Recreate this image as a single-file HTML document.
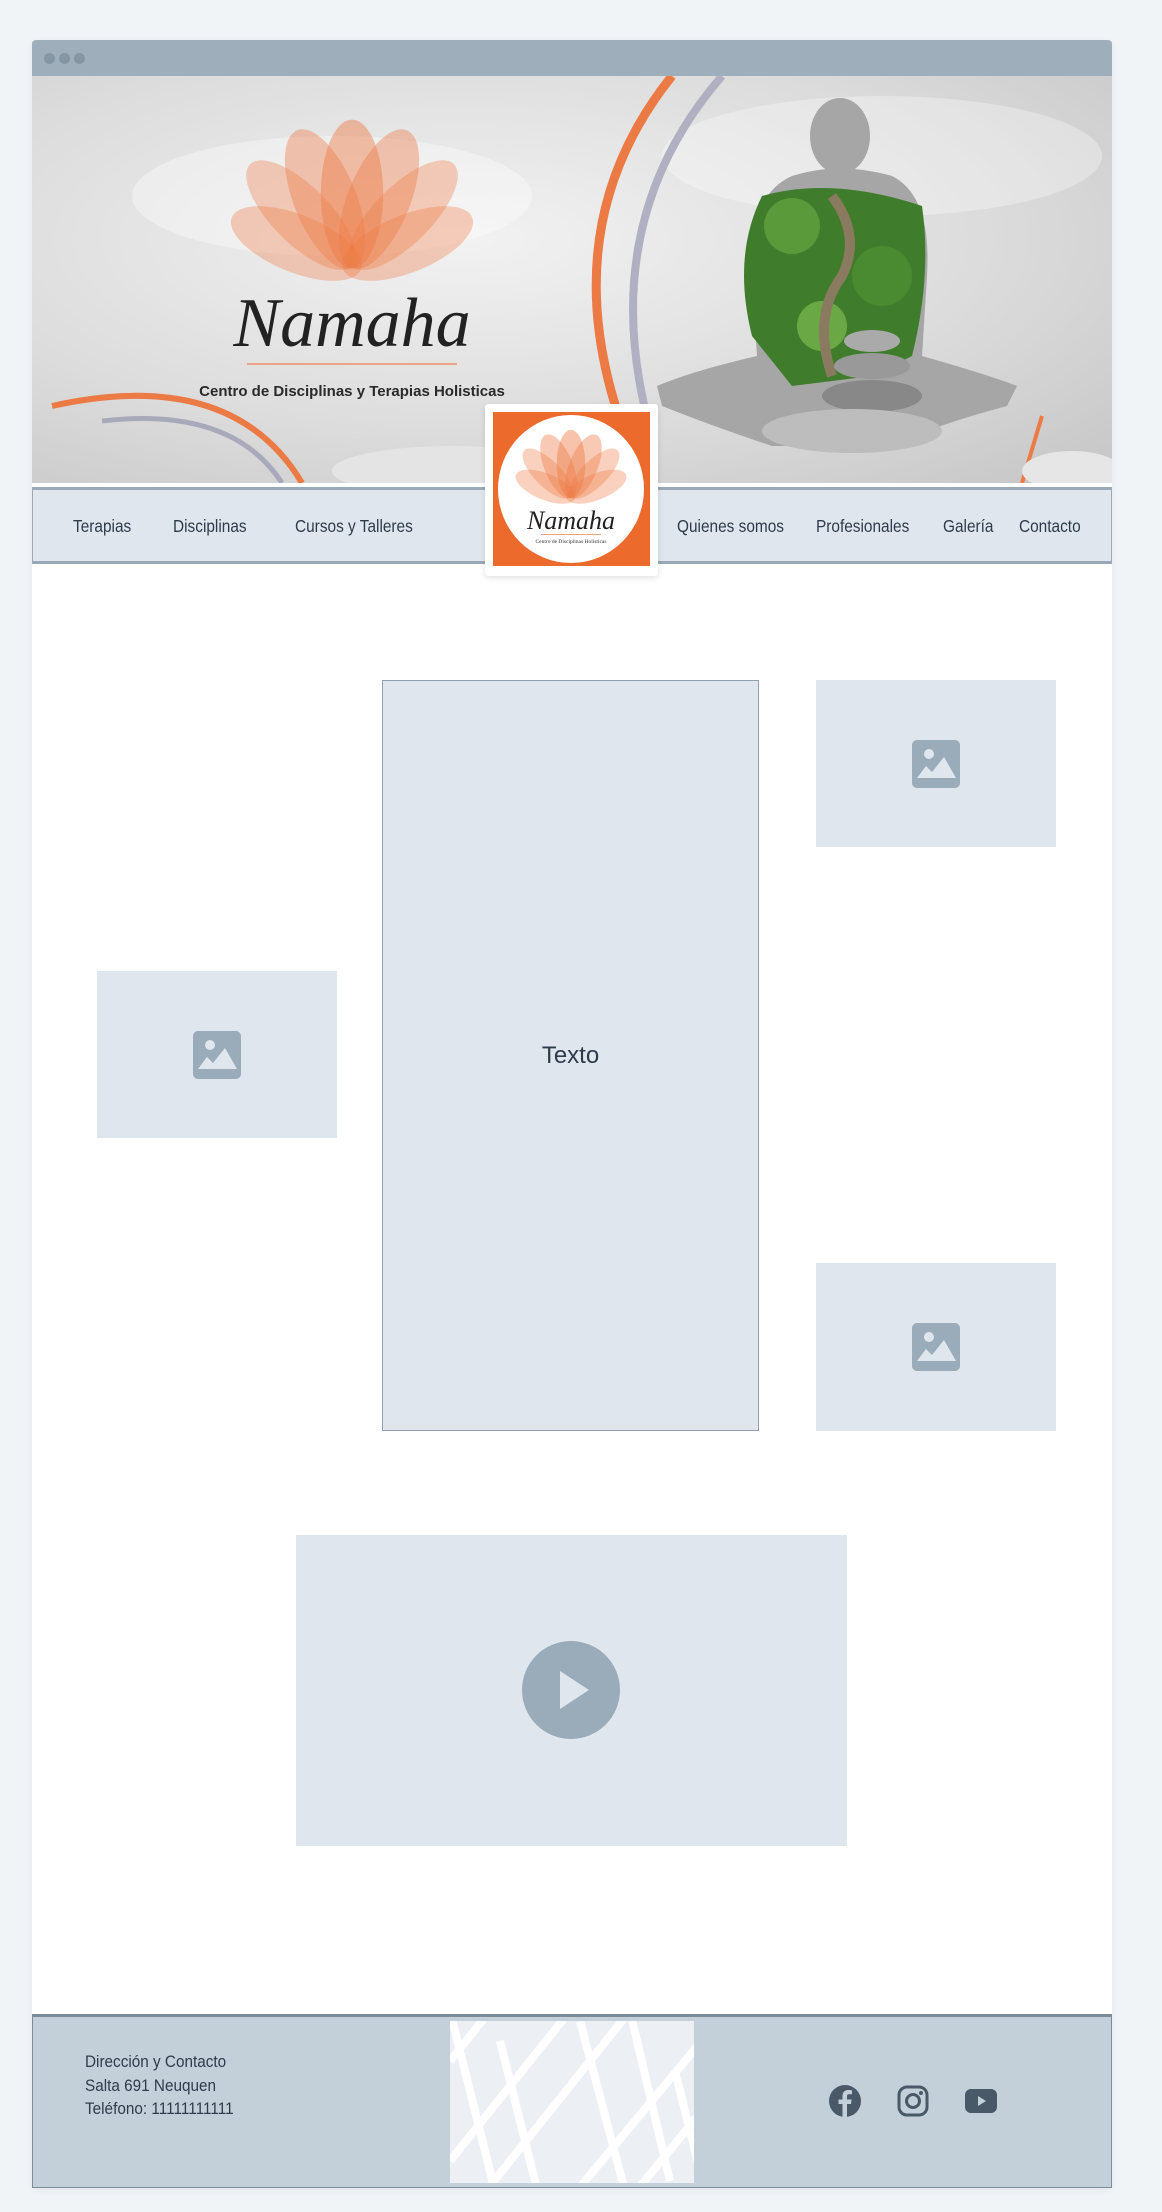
<!DOCTYPE html>
<html><head><meta charset="utf-8"><style>
*{margin:0;padding:0;box-sizing:border-box}
body{width:1162px;height:2212px;background:#f0f4f7;font-family:"Liberation Sans",sans-serif;position:relative;overflow:hidden}
.frame{position:absolute;left:32px;top:40px;width:1080px;height:2148px;background:#fff;border-radius:4px;box-shadow:0 2px 8px rgba(0,0,0,.06)}
.bar{position:absolute;left:32px;top:40px;width:1080px;height:36px;background:#9eaeba;border-radius:4px 4px 0 0}
.dot{position:absolute;top:13px;width:11px;height:11px;border-radius:50%;background:#8597a5}
.abs{position:absolute}
.img{position:absolute;background:#dfe6ee}
.img svg.pc{position:absolute;left:50%;top:50%;margin:-24px 0 0 -24px}
.nav{position:absolute;left:32px;top:487px;width:1080px;height:77px;background:#dfe6ee;border-top:3px solid #9aa9b6;border-bottom:3px solid #9aa9b6;border-left:1px solid #9aa9b6;border-right:1px solid #9aa9b6}
.nav span{position:absolute;top:26px;font-size:17.5px;color:#2f3b4a;transform:scaleX(.88);transform-origin:left}
.ft{position:absolute;left:32px;top:2014px;width:1080px;height:174px;background:#c3d0da;border:1px solid #7d8c99;border-top:3px solid #7d8c99}
.ft p{font-size:17px;color:#2f3b4a;line-height:23.5px;transform:scaleX(.9);transform-origin:left}
</style></head><body>
<div class="frame"></div>
<div class="bar"><div class="dot" style="left:12px"></div><div class="dot" style="left:27px"></div><div class="dot" style="left:42px"></div></div>

<svg class="abs" style="left:32px;top:76px" width="1080" height="407" viewBox="0 0 1080 407">
<defs>
<radialGradient id="sky" cx="0.4" cy="0.4" r="0.8"><stop offset="0" stop-color="#f2f2f2"/><stop offset="0.6" stop-color="#dcdcdc"/><stop offset="1" stop-color="#c8c8c8"/></radialGradient>
<g id="lotus" fill="#ee7a45">
<ellipse cx="0" cy="-60" rx="26" ry="62" opacity=".45"/>
<ellipse cx="0" cy="-60" rx="26" ry="62" opacity=".4" transform="rotate(-22)"/>
<ellipse cx="0" cy="-60" rx="26" ry="62" opacity=".4" transform="rotate(22)"/>
<ellipse cx="0" cy="-60" rx="24" ry="60" opacity=".35" transform="rotate(-45)"/>
<ellipse cx="0" cy="-60" rx="24" ry="60" opacity=".35" transform="rotate(45)"/>
<ellipse cx="0" cy="-50" rx="24" ry="58" opacity=".35" transform="rotate(-68)"/>
<ellipse cx="0" cy="-50" rx="24" ry="58" opacity=".35" transform="rotate(68)"/>
</g>
</defs>
<rect width="1080" height="407" fill="url(#sky)"/>
<ellipse cx="300" cy="120" rx="200" ry="60" fill="#fff" opacity=".35"/>
<ellipse cx="850" cy="80" rx="220" ry="60" fill="#fff" opacity=".3"/>
<use href="#lotus" transform="translate(320,190) scale(1.2)"/>
<text x="320" y="270" text-anchor="middle" font-family="Liberation Serif,serif" font-style="italic" font-size="70" fill="#222">Namaha</text>
<rect x="215" y="287" width="210" height="2" fill="#eea382"/>
<text x="320" y="320" text-anchor="middle" font-size="15" font-weight="bold" fill="#2a2a2a">Centro de Disciplinas y Terapias Holisticas</text>
<path d="M20 330 Q200 290 270 407" stroke="#ec7a44" stroke-width="6" fill="none"/>
<path d="M70 345 Q200 330 250 407" stroke="#a9a9bc" stroke-width="5" fill="none"/>
<path d="M640 0 Q520 150 590 350" stroke="#ec7a44" stroke-width="9" fill="none"/>
<path d="M690 0 Q560 150 620 360" stroke="#b0b0c2" stroke-width="8" fill="none"/>
<path d="M1010 340 L990 407" stroke="#ec7a44" stroke-width="4"/>
<g fill="#a6a6a6">
<ellipse cx="808" cy="60" rx="30" ry="38"/>
<path d="M760 100 Q808 85 860 100 Q900 120 895 200 L890 280 Q960 300 985 310 L975 330 Q900 350 860 370 L740 370 Q680 350 630 330 L625 310 Q660 295 725 280 L720 200 Q715 120 760 100Z"/>
</g>
<path d="M730 120 Q800 100 890 130 Q900 200 880 280 L840 300 L760 310 L720 260 Q700 180 730 120Z" fill="#3f7d2c"/>
<circle cx="760" cy="150" r="28" fill="#5a9a3a"/><circle cx="850" cy="200" r="30" fill="#4a8a30"/><circle cx="790" cy="250" r="25" fill="#6aa845"/>
<path d="M800 300 Q780 240 810 200 Q830 160 800 120" stroke="#8a7a60" stroke-width="10" fill="none"/>
<ellipse cx="840" cy="320" rx="50" ry="16" fill="#888"/><ellipse cx="840" cy="290" rx="38" ry="13" fill="#999"/><ellipse cx="840" cy="265" rx="28" ry="11" fill="#aaa"/>
<ellipse cx="820" cy="355" rx="90" ry="22" fill="#bdbdbd"/>
<ellipse cx="420" cy="395" rx="120" ry="25" fill="#e4e4e4"/>
<ellipse cx="1040" cy="395" rx="50" ry="20" fill="#e6e6e6"/>
</svg>

<div class="nav">
<span style="left:40px">Terapias</span>
<span style="left:140px">Disciplinas</span>
<span style="left:262px">Cursos y Talleres</span>
<span style="left:644px">Quienes somos</span>
<span style="left:783px">Profesionales</span>
<span style="left:910px">Galería</span>
<span style="left:986px">Contacto</span>
</div>

<div class="abs" style="left:485px;top:404px;width:173px;height:172px;background:#fff;border-radius:3px;box-shadow:0 2px 6px rgba(0,0,0,.12)"></div>
<svg class="abs" style="left:493px;top:412px" width="157" height="154" viewBox="0 0 157 154">
<rect width="157" height="154" fill="#ec6a2c"/>
<ellipse cx="78" cy="77" rx="73" ry="74" fill="#fff"/>
<use href="#lotus" transform="translate(78,85) scale(.55)"/>
<text x="78" y="117" text-anchor="middle" font-family="Liberation Serif,serif" font-style="italic" font-size="26" fill="#222">Namaha</text>
<rect x="48" y="122" width="60" height="1" fill="#eea382"/>
<text x="78" y="131" text-anchor="middle" font-family="Liberation Serif,serif" font-size="5.5" fill="#333">Centro de Disciplinas Holisticas</text>
</svg>

<svg width="0" height="0" style="position:absolute"><defs><g id="pic"><rect x="0" y="0" width="48" height="48" rx="5" fill="#9aabb9"/><circle cx="17" cy="14" r="5" fill="#dfe6ee"/><path d="M5 38 L14 26 L20 32 L32 17 L44 38Z" fill="#dfe6ee"/></g></defs></svg>
<div class="img" style="left:97px;top:971px;width:240px;height:167px"><svg class="pc" width="48" height="48"><use href="#pic"/></svg></div>
<div class="img" style="left:816px;top:680px;width:240px;height:167px"><svg class="pc" width="48" height="48"><use href="#pic"/></svg></div>
<div class="img" style="left:816px;top:1263px;width:240px;height:168px"><svg class="pc" width="48" height="48"><use href="#pic"/></svg></div>
<div class="img" style="left:382px;top:680px;width:377px;height:751px;border:1.5px solid #8fa0b0"><div style="position:absolute;top:361px;width:100%;text-align:center;font-size:24px;color:#2f3b4a">Texto</div></div>
<div class="img" style="left:296px;top:1535px;width:551px;height:311px">
<svg class="abs" style="left:226px;top:106px" width="98" height="98"><circle cx="49" cy="49" r="49" fill="#9aabb9"/><path d="M38 30 L67 49 L38 68Z" fill="#dfe6ee"/></svg>
</div>

<div class="ft">
<div style="position:absolute;left:52px;top:33px"><p>Dirección y Contacto</p><p>Salta 691 Neuquen</p><p>Teléfono: 11111111111</p></div>
<svg class="abs" style="left:417px;top:4px" width="244" height="162" viewBox="0 0 244 162">
<rect width="244" height="162" fill="#eceff4"/>
<g stroke="#fff" stroke-width="8">
<path d="M0 40 L80 -60 M0 140 L160 -60 M20 190 L260 -110 M110 190 L260 10 M170 190 L260 80"/>
<path d="M0 -10 L45 170 M50 20 L90 180 M130 0 L175 170 M180 -10 L220 160 M225 50 L250 150"/>
</g>
</svg>
<svg class="abs" style="left:796px;top:68px" width="32" height="32" viewBox="0 0 32 32"><circle cx="16" cy="16" r="16" fill="#4a5968"/><path d="M18 32 V19 h4 l.6-4.5H18v-3c0-1.3.4-2.2 2.3-2.2H23V5.3C22.5 5.2 21 5 19.3 5 15.8 5 13.5 7.1 13.5 11v3.5H9.5V19h4v13Z" fill="#c3d0da"/></svg>
<svg class="abs" style="left:864px;top:68px" width="32" height="32" viewBox="0 0 32 32"><rect x="2" y="2" width="28" height="28" rx="8" fill="none" stroke="#4a5968" stroke-width="3"/><circle cx="16" cy="16" r="6.5" fill="none" stroke="#4a5968" stroke-width="3"/><circle cx="24" cy="8" r="2" fill="#4a5968"/></svg>
<svg class="abs" style="left:932px;top:70px" width="32" height="28" viewBox="0 0 32 28"><rect x="0" y="2" width="32" height="24" rx="6" fill="#4a5968"/><path d="M13 9 L21 14 L13 19Z" fill="#c3d0da"/></svg>
</div>
</body></html>
